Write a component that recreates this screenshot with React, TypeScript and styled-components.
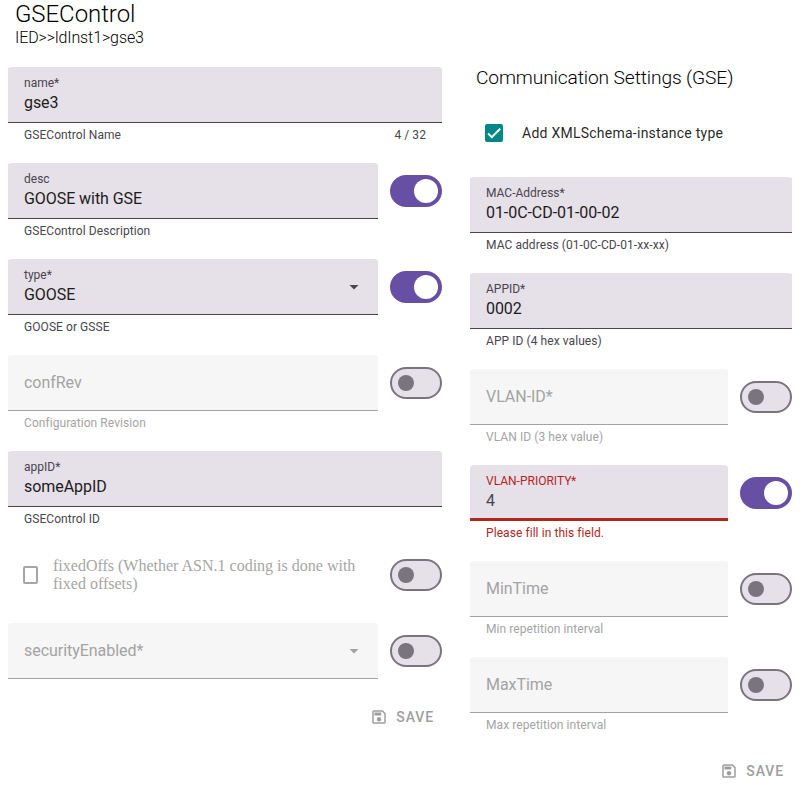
import React from "react";
import styled, { createGlobalStyle, css } from "styled-components";

const GlobalStyle = createGlobalStyle`
  * { box-sizing: border-box; }
  body { margin: 0; background: #fff; font-family: Roboto, sans-serif; }
`;

const Page = styled.main`
  width: 800px;
  height: 805px;
  padding: 0 8px;
  overflow: hidden;
`;

const Header = styled.header`
  height: 67px;
  padding-left: 7px;
  color: #000;
  font-weight: 300;
`;

const Title = styled.h2`
  margin: 0;
  font-size: 24px;
  font-weight: 300;
  line-height: 28px;
  letter-spacing: -0.06px;
`;

const Path = styled.div`
  font-size: 16px;
  line-height: 19px;
  letter-spacing: -0.1px;
`;

const Columns = styled.div`
  display: grid;
  grid-template-columns: 434px 322px;
  column-gap: 28px;
  align-items: start;
`;

const Column = styled.section`
  display: flex;
  flex-direction: column;
  gap: 20px;
`;

const SectionTitle = styled.h3`
  margin: 0;
  padding-left: 6px;
  height: 22px;
  font-size: 19.2px;
  font-weight: 300;
  line-height: 22px;
  letter-spacing: -0.12px;
  color: #000;
`;

const Row = styled.div`
  display: flex;
  gap: 12px;
`;

const FieldWrap = styled.div`
  flex: 1;
  min-width: 0;
`;

type FieldState = "normal" | "disabled" | "error";

const Box = styled.div<{ $state: FieldState }>`
  display: flex;
  align-items: center;
  justify-content: space-between;
  height: 56px;
  padding: 0 16px;
  border-radius: 4px 4px 0 0;
  background: #e6e0e9;
  box-shadow: inset 0 -1px #49454f;
  ${(p) => p.$state === "disabled" && css`
    background: #f6f6f6;
    box-shadow: inset 0 -1px #a3a3a3;
  `}
  ${(p) => p.$state === "error" && css`
    box-shadow: inset 0 -3px #b3261e;
  `}
`;

const Label = styled.div<{ $error: boolean }>`
  font-size: 12px;
  line-height: 16px;
  color: ${(p) => (p.$error ? "#b3261e" : "#49454f")};
`;

const Value = styled.div<{ $error: boolean }>`
  font-size: 16px;
  line-height: 24px;
  letter-spacing: -0.06px;
  color: ${(p) => (p.$error ? "#49454f" : "#1d1b20")};
`;

const Placeholder = styled.div`
  font-size: 16px;
  line-height: 24px;
  letter-spacing: -0.04px;
  color: #a4a3a5;
`;

const Support = styled.div<{ $state: FieldState }>`
  display: flex;
  justify-content: space-between;
  padding: 4px 16px 0;
  font-size: 12px;
  line-height: 16px;
  letter-spacing: 0.07px;
  color: ${(p) => ({ normal: "#49454f", disabled: "#a4a3a5", error: "#b3261e" })[p.$state]};
`;

const Arrow = styled.span<{ $disabled: boolean }>`
  width: 10px;
  height: 5px;
  margin-right: 3px;
  background: ${(p) => (p.$disabled ? "#a3a3a3" : "#49454f")};
  clip-path: polygon(0 0, 100% 0, 50% 100%);
`;

const Toggle = styled.button<{ $on: boolean }>`
  display: flex;
  align-items: center;
  justify-content: ${(p) => (p.$on ? "flex-end" : "flex-start")};
  width: 52px;
  height: 32px;
  margin: 12px 0 0;
  padding: ${(p) => (p.$on ? "0 2px" : "0 6px")};
  border: 2px solid ${(p) => (p.$on ? "#6750a4" : "#79747e")};
  border-radius: 16px;
  background: ${(p) => (p.$on ? "#6750a4" : "#e6e0e9")};
`;

const Knob = styled.span<{ $on: boolean }>`
  width: ${(p) => (p.$on ? 24 : 16)}px;
  height: ${(p) => (p.$on ? 24 : 16)}px;
  border-radius: 50%;
  background: ${(p) => (p.$on ? "#fff" : "#79747e")};
`;

const OffsetsRow = styled(Row)`
  height: 56px;
`;

const OffsetsLabel = styled.div`
  display: flex;
  flex: 1;
  align-items: center;
  padding: 0 15px;
  gap: 15px;
  font: 16px/18px "Liberation Serif", serif;
  color: #a6a6a6;
`;

const EmptyBox = styled.span`
  flex: none;
  width: 15px;
  height: 18px;
  border: 2px solid #a6a6a6;
  border-radius: 2px;
`;

const TypeRow = styled.label`
  display: flex;
  align-items: center;
  height: 48px;
  padding-left: 15px;
  gap: 19px;
  font-size: 14px;
  letter-spacing: 0.25px;
  color: rgba(0, 0, 0, 0.87);
`;

const CheckedBox = styled.span`
  display: flex;
  width: 18px;
  height: 18px;
  align-items: center;
  justify-content: center;
  border-radius: 2px;
  background: #018786;
`;

const Actions = styled.div`
  display: flex;
  justify-content: flex-end;
`;

const SaveButton = styled.button`
  display: flex;
  align-items: center;
  gap: 8px;
  height: 36px;
  padding: 0 8px;
  border: 0;
  background: none;
  font: 500 14px Roboto, sans-serif;
  letter-spacing: 0.9px;
  color: #9e9e9e;
`;

const Switch = ({ on }: { on: boolean }) => (
  <Toggle $on={on} role="switch" aria-checked={on}>
    <Knob $on={on} />
  </Toggle>
);

interface FieldProps {
  label: string;
  value?: string;
  support?: string;
  counter?: string;
  state?: FieldState;
  select?: boolean;
  toggle?: boolean;
}

const Field = ({ label, value, support, counter, state = "normal", select, toggle }: FieldProps) => (
  <Row>
    <FieldWrap>
      <Box $state={state}>
        {value ? (
          <div>
            <Label $error={state === "error"}>{label}</Label>
            <Value $error={state === "error"}>{value}</Value>
          </div>
        ) : (
          <Placeholder>{label}</Placeholder>
        )}
        {select && <Arrow $disabled={state === "disabled"} />}
      </Box>
      {support && (
        <Support $state={state}>
          <span>{support}</span>
          {counter && <span>{counter}</span>}
        </Support>
      )}
    </FieldWrap>
    {toggle !== undefined && <Switch on={toggle} />}
  </Row>
);

const Save = () => (
  <Actions>
    <SaveButton>
      <svg width="18" height="18" viewBox="0 0 24 24" fill="currentColor">
        <path d="M17 3H5a2 2 0 0 0-2 2v14a2 2 0 0 0 2 2h14a2 2 0 0 0 2-2V7l-4-4zm2 16H5V5h11.17L19 7.83V19zm-7-7a3 3 0 1 0 0 6 3 3 0 0 0 0-6zM6 6h9v4H6z" />
      </svg>
      SAVE
    </SaveButton>
  </Actions>
);

export default function App() {
  return (
    <Page>
      <GlobalStyle />
      <Header>
        <Title>GSEControl</Title>
        <Path>IED&gt;&gt;ldInst1&gt;gse3</Path>
      </Header>
      <Columns>
        <Column>
          <Field label="name*" value="gse3" support="GSEControl Name" counter="4 / 32" />
          <Field label="desc" value="GOOSE with GSE" support="GSEControl Description" toggle />
          <Field label="type*" value="GOOSE" support="GOOSE or GSSE" select toggle />
          <Field label="confRev" support="Configuration Revision" state="disabled" toggle={false} />
          <Field label="appID*" value="someAppID" support="GSEControl ID" />
          <OffsetsRow>
            <OffsetsLabel>
              <EmptyBox />
              <span>fixedOffs (Whether ASN.1 coding is done with fixed offsets)</span>
            </OffsetsLabel>
            <Switch on={false} />
          </OffsetsRow>
          <Field label="securityEnabled*" state="disabled" select toggle={false} />
          <Save />
        </Column>
        <Column>
          <SectionTitle>Communication Settings (GSE)</SectionTitle>
          <TypeRow>
            <CheckedBox>
              <svg width="18" height="18" viewBox="0 0 24 24" fill="none" stroke="#fff" strokeWidth="2.6">
                <path d="M4.1 12.7 9 17.6 20.3 6.3" />
              </svg>
            </CheckedBox>
            Add XMLSchema-instance type
          </TypeRow>
          <Field label="MAC-Address*" value="01-0C-CD-01-00-02" support="MAC address (01-0C-CD-01-xx-xx)" />
          <Field label="APPID*" value="0002" support="APP ID (4 hex values)" />
          <Field label="VLAN-ID*" support="VLAN ID (3 hex value)" state="disabled" toggle={false} />
          <Field label="VLAN-PRIORITY*" value="4" support="Please fill in this field." state="error" toggle />
          <Field label="MinTime" support="Min repetition interval" state="disabled" toggle={false} />
          <Field label="MaxTime" support="Max repetition interval" state="disabled" toggle={false} />
          <Save />
        </Column>
      </Columns>
    </Page>
  );
}
